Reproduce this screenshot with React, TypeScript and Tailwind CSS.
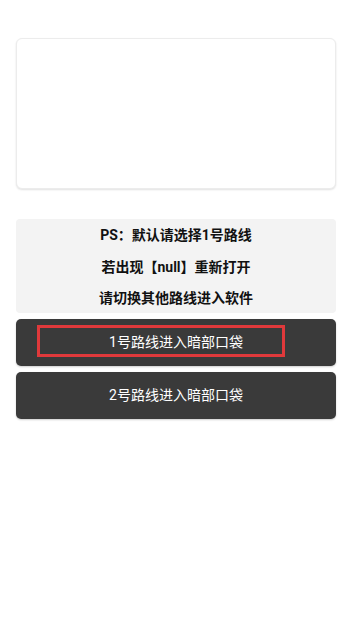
export default function App() {
  const font = { fontFamily: 'Roboto, "Noto Sans CJK SC", "Noto Sans", sans-serif' };
  return (
    <div className="w-[352px] h-[634px] bg-white px-4 pt-[38px]" style={font}>
      <div className="h-[151px] rounded-md bg-white border border-[#ececec] shadow-[0_1px_2px_rgba(0,0,0,0.12)]" />
      <div className="mt-[30px] rounded-[4px] bg-[#f3f3f3] flex flex-col items-center">
        <div className="h-[32px] flex items-center text-[14px] font-bold text-[#111]">PS：默认请选择1号路线</div>
        <div className="h-[32px] flex items-center text-[14px] font-bold text-[#111]">若出现【null】重新打开</div>
        <div className="h-[30px] flex items-center text-[14px] font-bold text-[#111]">请切换其他路线进入软件</div>
      </div>
      <div className="mt-[6px] flex flex-col gap-[6px]">
        <div className="relative h-[47px] rounded-[5px] bg-[#3a3a3a] shadow-[0_1px_2px_rgba(0,0,0,0.2)] flex items-center justify-center text-[14px] text-white">
          1号路线进入暗部口袋
          <div className="absolute left-[21px] top-[6px] w-[248px] h-[32px] border-[3px] border-[#e0393b]" />
        </div>
        <div className="h-[47px] rounded-[5px] bg-[#3a3a3a] shadow-[0_1px_2px_rgba(0,0,0,0.2)] flex items-center justify-center text-[14px] text-white">
          2号路线进入暗部口袋
        </div>
      </div>
    </div>
  );
}
